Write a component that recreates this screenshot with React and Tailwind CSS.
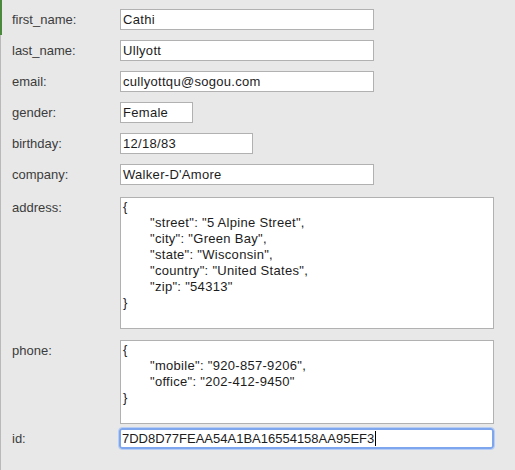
import React from 'react';

const font = { fontFamily: '"Liberation Sans", Arial, sans-serif' };

const Field = ({ label, value, width, top }) => (
  <div className={`flex items-center ${top}`}>
    <div className="w-[108px] text-[13px] text-[#3c3c3c]">{label}</div>
    <div
      className={`${width} h-[21px] bg-white border border-[#b1b1b1] pl-[2px] flex items-center text-[13px] tracking-[0.3px] text-[#1c1c1c] leading-none`}
    >
      {value}
    </div>
  </div>
);

const JsonBox = ({ label, lines, height, top }) => (
  <div className={`flex items-start ${top}`}>
    <div className="w-[108px] h-[21px] flex items-center text-[13px] text-[#3c3c3c]">{label}</div>
    <div className={`w-[374px] ${height} bg-white border border-[#b1b1b1] pl-[2px] pt-[1px] text-[13px] tracking-[0.3px] leading-[16px] text-[#1c1c1c]`}>
      <div>{'{'}</div>
      {lines.map((l) => (
        <div key={l} className="pl-[27px]">{l}</div>
      ))}
      <div>{'}'}</div>
    </div>
  </div>
);

export default function App() {
  return (
    <div className="w-[515px] h-[470px] bg-[#e8e8e8] flex overflow-hidden" style={font}>
      <div className="w-[2px] flex flex-col">
        <div className="h-[35px] w-[2px] bg-[#4b8a3c]" />
        <div className="flex-1 w-[1px] bg-[#b9b9b9]" />
      </div>
      <div className="flex-1 pl-[10px] pt-[9px] flex flex-col">
        <Field label="first_name:" value="Cathi" width="w-[254px]" top="" />
        <Field label="last_name:" value="Ullyott" width="w-[254px]" top="mt-[10px]" />
        <Field label="email:" value="cullyottqu@sogou.com" width="w-[254px]" top="mt-[10px]" />
        <Field label="gender:" value="Female" width="w-[73px]" top="mt-[10px]" />
        <Field label="birthday:" value="12/18/83" width="w-[133px]" top="mt-[10px]" />
        <Field label="company:" value="Walker-D'Amore" width="w-[254px]" top="mt-[10px]" />
        <JsonBox
          label="address:"
          top="mt-[12px]"
          height="h-[132px]"
          lines={[
            '"street": "5 Alpine Street",',
            '"city": "Green Bay",',
            '"state": "Wisconsin",',
            '"country": "United States",',
            '"zip": "54313"',
          ]}
        />
        <JsonBox
          label="phone:"
          top="mt-[11px]"
          height="h-[84px]"
          lines={['"mobile": "920-857-9206",', '"office": "202-412-9450"']}
        />
        <div className="flex items-center mt-[4px]">
          <div className="w-[107px] text-[13px] text-[#3c3c3c]">id:</div>
          <div className="w-[375px] h-[21px] bg-white border-2 border-[#7ea6ee] rounded-[3px] outline outline-1 outline-[#b8cdf3] pl-[1px] flex items-center text-[13px] text-[#1c1c1c] leading-none">
            <span>7DD8D77FEAA54A1BA16554158AA95EF3</span>
            <span className="w-px h-[15px] bg-black ml-[1px]" />
          </div>
        </div>
      </div>
    </div>
  );
}
